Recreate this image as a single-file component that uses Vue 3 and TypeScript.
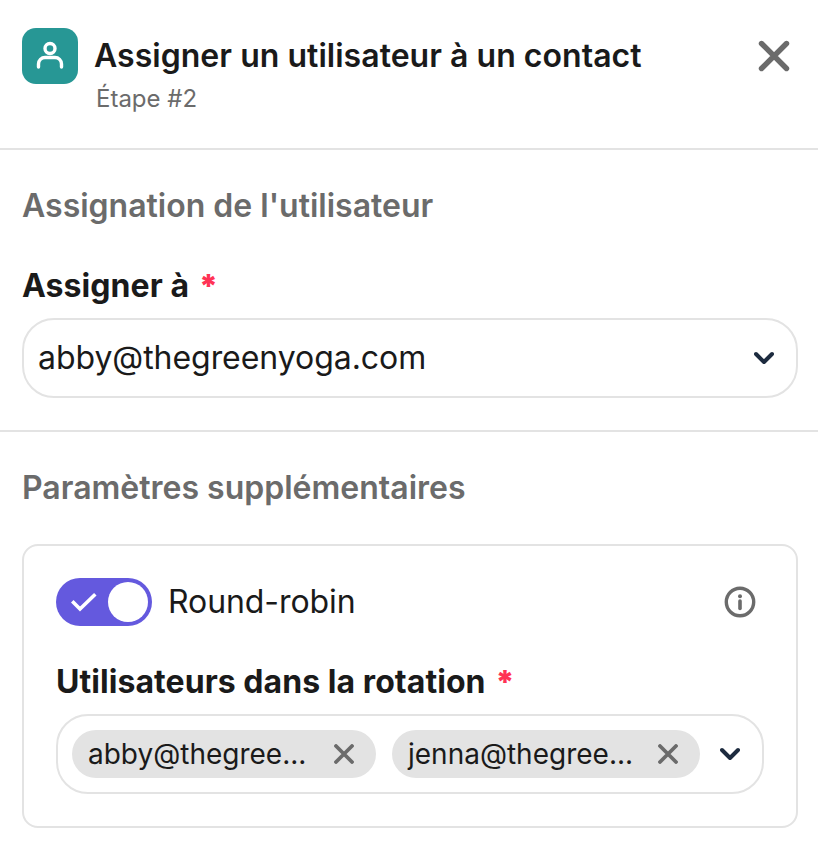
<script setup lang="ts">
const chips: string[] = ['abby@thegree...', 'jenna@thegree...']
</script>

<template>
  <main class="panel">
    <header class="head">
      <div class="badge">
        <svg width="32" height="32" viewBox="0 0 32 32" fill="none" stroke="#fff" stroke-width="3.4" stroke-linecap="round">
          <circle cx="16" cy="8.5" r="5" />
          <path d="M4.500 27v-3a6.500 6.500 0 0 1 6.500-6.500h10a6.500 6.500 0 0 1 6.500 6.500v3" />
        </svg>
      </div>
      <div class="head-text">
        <h1>Assigner un utilisateur à un contact</h1>
        <p>Étape #2</p>
      </div>
      <button class="close" aria-label="Fermer">
        <svg width="32" height="32" viewBox="0 0 32 32" fill="none" stroke="#6b6b6b" stroke-width="5.400" stroke-linecap="round">
          <path d="M3.500 3.500l25 25M28.500 3.500l-25 25" />
        </svg>
      </button>
    </header>

    <section class="assign">
      <h2>Assignation de l'utilisateur</h2>
      <label class="field-label">Assigner à <span class="req">*</span></label>
      <div class="select">
        <span class="value">abby@thegreenyoga.com</span>
        <svg class="chev" width="20" height="14" viewBox="0 0 20 14" fill="none" stroke="#1d2b3f" stroke-width="4" stroke-linecap="round" stroke-linejoin="round">
          <path d="M2 3l8 8 8-8" />
        </svg>
      </div>
    </section>

    <section class="extra">
      <h2>Paramètres supplémentaires</h2>
      <div class="card">
        <div class="toggle-row">
          <div class="toggle">
            <svg width="26" height="20" viewBox="0 0 26 20" fill="none" stroke="#fff" stroke-width="3.600" stroke-linecap="square">
              <path d="M2.500 10.500l6.500 6.500L23 3.500" />
            </svg>
            <span class="knob"></span>
          </div>
          <span class="toggle-label">Round-robin</span>
          <svg class="info" width="32" height="32" viewBox="0 0 32 32" fill="none">
            <circle cx="16" cy="16" r="13.700" stroke="#6b6b6b" stroke-width="3.400" />
            <circle cx="16" cy="10.200" r="2" fill="#6b6b6b" />
            <path d="M16 15v7.500" stroke="#6b6b6b" stroke-width="3.600" stroke-linecap="round" />
          </svg>
        </div>
        <label class="field-label">Utilisateurs dans la rotation <span class="req">*</span></label>
        <div class="multi">
          <span v-for="c in chips" :key="c" class="chip">
            <span class="chip-text">{{ c }}</span>
            <svg width="20" height="20" viewBox="0 0 20 20" fill="none" stroke="#6b6b6b" stroke-width="3.800" stroke-linecap="round">
              <path d="M2 2l16 16M18 2L2 18" />
            </svg>
          </span>
          <svg class="chev-multi" width="20" height="14" viewBox="0 0 20 14" fill="none" stroke="#1d2b3f" stroke-width="4" stroke-linecap="round" stroke-linejoin="round">
            <path d="M2 3l8 8 8-8" />
          </svg>
        </div>
      </div>
    </section>
  </main>
</template>

<style scoped>
.panel {
  width: 818px;
  height: 856px;
  background: #fff;
  color: #1a1a1a;
  font-family: Inter, "Liberation Sans", sans-serif;
  font-size: 32px;
  overflow: hidden;
  box-sizing: border-box;
}
.head {
  display: flex;
  align-items: flex-start;
  height: 150px;
  box-sizing: border-box;
  padding: 28px 28px 0 22px;
  border-bottom: 2px solid #e3e3e3;
}
.badge {
  width: 56px;
  height: 56px;
  flex: none;
  border-radius: 14px;
  background: #279795;
  display: flex;
  align-items: center;
  justify-content: center;
}
.head-text {
  flex: 1;
  margin-left: 16px;
}
h1 {
  margin: 0;
  font-size: 32px;
  line-height: 56px;
  font-weight: 600;
  letter-spacing: 0.03px;
}
p {
  margin: 1px 0 0 2px;
  font-size: 24px;
  line-height: 28px;
  color: #6b6b6b;
}
.close {
  border: 0;
  padding: 0;
  background: none;
  display: flex;
  margin-top: 12px;
}
.assign {
  height: 282px;
  box-sizing: border-box;
  padding: 36px 20px 0 22px;
  border-bottom: 2px solid #e3e3e3;
}
h2 {
  margin: 0;
  font-size: 32px;
  line-height: 40px;
  font-weight: 600;
  color: #6b6b6b;
}
.field-label {
  display: block;
  font-weight: 700;
  line-height: 40px;
  letter-spacing: 0.06px;
}
.assign .field-label {
  margin-top: 40px;
}
.req {
  color: #ff3355;
  font-weight: 900;
  margin-left: 2px;
}
.select {
  margin-top: 12px;
  height: 80px;
  box-sizing: border-box;
  border: 2px solid #e3e3e3;
  border-radius: 32px;
  display: flex;
  align-items: center;
  justify-content: space-between;
  padding: 0 22px 0 14px;
}
.value {
  padding-bottom: 2px;
  letter-spacing: -0.05px;
}
.extra {
  padding: 36px 20px 0 22px;
}
.card {
  margin-top: 36px;
  height: 284px;
  box-sizing: border-box;
  border: 2px solid #e3e3e3;
  border-radius: 16px;
  padding: 32px 32px 0;
}
.toggle-row {
  display: flex;
  align-items: center;
  height: 48px;
}
.toggle {
  width: 96px;
  height: 48px;
  border-radius: 24px;
  background: #6459de;
  display: flex;
  align-items: center;
  justify-content: space-between;
  padding: 0 4px 0 15px;
  box-sizing: border-box;
}
.knob {
  width: 40px;
  height: 40px;
  border-radius: 50%;
  background: #fff;
}
.toggle-label {
  flex: 1;
  margin-left: 16px;
  padding-bottom: 2px;
  letter-spacing: -0.08px;
}
.info {
  margin-right: 8px;
}
.card .field-label {
  margin-top: 36px;
}
.multi {
  margin-top: 12px;
  height: 80px;
  box-sizing: border-box;
  border: 2px solid #e3e3e3;
  border-radius: 32px;
  display: flex;
  align-items: center;
  gap: 16px;
  padding: 0 22px 0 14px;
}
.chip {
  flex: none;
  height: 48px;
  border-radius: 24px;
  background: #e3e3e3;
  display: flex;
  align-items: center;
  justify-content: space-between;
  padding: 0 22px 0 16px;
  box-sizing: border-box;
  font-size: 28px;
}
.chip:nth-child(1) { width: 304px; }
.chip:nth-child(2) { width: 308px; }
.chev-multi {
  flex: none;
  margin-left: 4px;
}
</style>
